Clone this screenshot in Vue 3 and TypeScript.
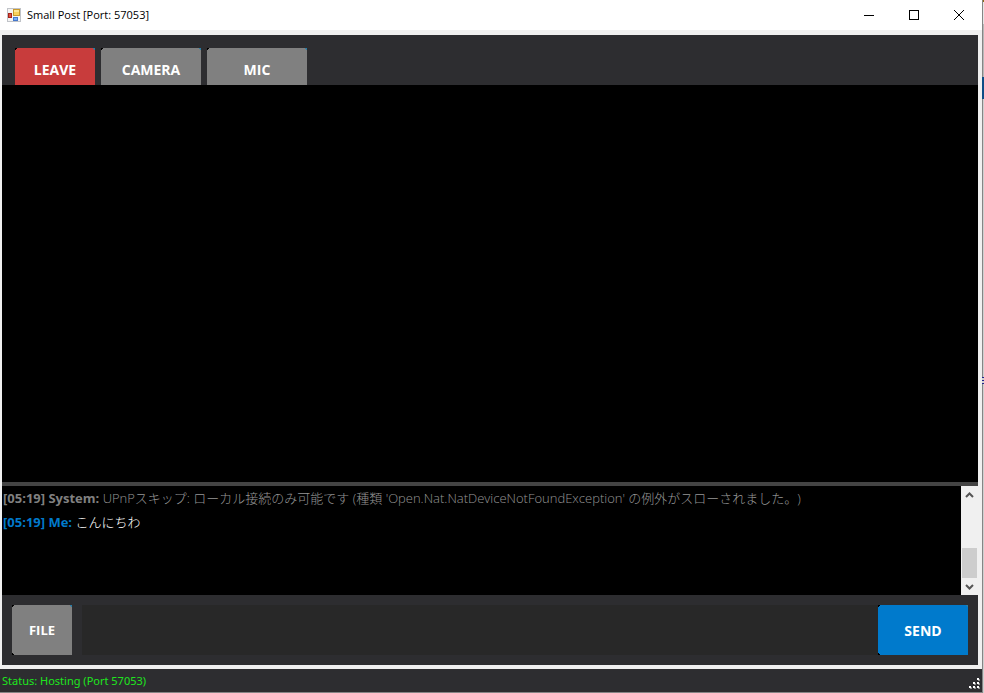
<script setup lang="ts">
import { ref } from 'vue'

interface LogLine {
  time: string
  author: string
  text: string
  kind: 'system' | 'me'
}

const port = 57053
const draft = ref('')
const lines = ref<LogLine[]>([
  {
    time: '05:19',
    author: 'System',
    text: "UPnPスキップ: ローカル接続のみ可能です (種類 'Open.Nat.NatDeviceNotFoundException' の例外がスローされました。)",
    kind: 'system',
  },
  { time: '05:19', author: 'Me', text: 'こんにちわ', kind: 'me' },
])

function send(): void {
  const text = draft.value.trim()
  if (!text) return
  lines.value.push({ time: new Date().toTimeString().slice(0, 5), author: 'Me', text, kind: 'me' })
  draft.value = ''
}
</script>

<template>
  <div class="desktop">
    <div class="window">
      <header class="titlebar">
        <svg class="app-icon" width="14" height="14" viewBox="0 0 14 14" aria-hidden="true">
          <rect x="0.5" y="0.5" width="13" height="13" fill="#f4f4f4" stroke="#c0c3c8" />
          <rect x="6.5" y="1.5" width="6" height="6" fill="#f9d25c" stroke="#c99a2c" />
          <rect x="7" y="2" width="5" height="2" fill="#fde596" />
          <rect x="1.5" y="5.5" width="3" height="4" fill="#dc5040" stroke="#a5231a" />
          <rect x="6.5" y="9.5" width="4" height="3" fill="#78aef6" stroke="#4577cc" />
        </svg>
        <h1 class="title">Small Post [Port: {{ port }}]</h1>
        <div class="caption-buttons">
          <button type="button" aria-label="Minimize">
            <svg width="12" height="12" viewBox="0 0 12 12"><path d="M1 6.5h10" /></svg>
          </button>
          <button type="button" aria-label="Maximize">
            <svg width="12" height="12" viewBox="0 0 12 12"><rect x="1.5" y="1.5" width="9" height="9" /></svg>
          </button>
          <button type="button" aria-label="Close">
            <svg width="12" height="12" viewBox="0 0 12 12"><path d="M1 1l10 10M11 1L1 11" /></svg>
          </button>
        </div>
      </header>

      <main class="client">
        <nav class="toolbar">
          <button type="button" class="btn tab leave">LEAVE</button>
          <button type="button" class="btn tab">CAMERA</button>
          <button type="button" class="btn tab">MIC</button>
        </nav>
        <section class="video" aria-label="Video"></section>
        <section class="log" aria-label="Chat">
          <div class="messages">
            <p v-for="(line, i) in lines" :key="i" class="line" :class="line.kind">
              <b>[{{ line.time }}] {{ line.author }}:</b> <span>{{ line.text }}</span>
            </p>
          </div>
          <div class="scrollbar">
            <button type="button" aria-label="Scroll up">
              <svg width="9" height="6" viewBox="0 0 9 6"><path d="M1 5l3.500-3.500L8 5" /></svg>
            </button>
            <div class="track"><div class="thumb"></div></div>
            <button type="button" aria-label="Scroll down">
              <svg width="9" height="6" viewBox="0 0 9 6"><path d="M1 1l3.500 3.500L8 1" /></svg>
            </button>
          </div>
        </section>
        <form class="composer" @submit.prevent="send">
          <button type="button" class="btn file">FILE</button>
          <input v-model="draft" class="message" type="text" aria-label="Message" />
          <button type="submit" class="btn send">SEND</button>
        </form>
      </main>

      <footer class="status">
        <span>Status: Hosting (Port {{ port }})</span>
        <svg class="grip" width="12" height="12" viewBox="0 0 12 12" aria-hidden="true">
          <path class="grip-shade" d="M9 1h2v2h-2zM5 5h2v2h-2zM9 5h2v2h-2zM1 9h2v2h-2zM5 9h2v2h-2zM9 9h2v2h-2z" />
          <path class="grip-dot" d="M8 0h2v2h-2zM4 4h2v2h-2zM8 4h2v2h-2zM0 8h2v2h-2zM4 8h2v2h-2zM8 8h2v2h-2z" />
        </svg>
      </footer>
    </div>
    <div class="behind" aria-hidden="true">
      <i class="gold"></i><i class="pale"></i><i class="blue"></i><i class="light"></i><i class="text-edge"></i><i class="light rest"></i>
    </div>
  </div>
</template>

<style>
body {
  margin: 0;
  background: #c9c9c9;
}
</style>

<style scoped>
.desktop {
  display: flex;
  height: 100vh;
  font-family: "Open Sans", "Noto Sans CJK JP", sans-serif;
  font-size: 11px;
}
.window {
  flex: 1;
  min-width: 0;
  display: flex;
  flex-direction: column;
  box-sizing: border-box;
  background: #f0f0f0;
  border-right: 1px solid #858585;
  border-bottom: 1px solid #858585;
}
button {
  margin: 0;
  padding: 0;
  border: 0;
  font: inherit;
}
.titlebar {
  height: 30px;
  flex: none;
  display: flex;
  align-items: center;
  padding: 0 1px 0 7px;
  background: #fff;
}
.app-icon {
  flex: none;
  margin-right: 6px;
}
.title {
  flex: 1;
  margin: 0;
  font-size: 11px;
  font-weight: 400;
  line-height: 30px;
  color: #000;
}
.caption-buttons {
  display: flex;
}
.caption-buttons button {
  width: 45px;
  height: 28px;
  display: grid;
  place-items: center;
  background: #fff;
}
.caption-buttons svg {
  fill: none;
  stroke: #000;
}
.client {
  flex: 1;
  min-height: 0;
  display: flex;
  flex-direction: column;
  margin: 5px 4px 4px 2px;
}
.toolbar {
  height: 50px;
  flex: none;
  display: flex;
  align-items: flex-end;
  gap: 6px;
  padding-left: 13px;
  box-sizing: border-box;
  background: #2d2d30;
}
.btn {
  font-size: 14px;
  font-weight: 700;
  color: #fff;
  background:
    linear-gradient(135deg, #000 2px, transparent 2px) top left / 4px 4px no-repeat,
    linear-gradient(225deg, #2b7ea6 2px, transparent 2px) top right / 4px 4px no-repeat,
    #808080;
}
.tab {
  width: 100px;
  height: 37px;
  padding-top: 5px;
}
.leave {
  width: 80px;
  background-color: #c83c3c;
}
.video {
  flex: 1;
  min-height: 0;
  background: #000;
  border-bottom: 4px solid #444;
}
.log {
  height: 109px;
  flex: none;
  display: flex;
  background: #000;
}
.messages {
  flex: 1;
  min-width: 0;
  padding: 0 1px;
}
.line {
  margin: 0;
  font-size: 13px;
  line-height: 24px;
  color: #808080;
  text-spacing-trim: space-all;
}
.line span {
  font-weight: 300;
  color: #969696;
}
.me b {
  color: #007acc;
}
.me span {
  color: #fff;
}
.scrollbar {
  width: 17px;
  display: flex;
  flex-direction: column;
  background: #f0f0f0;
}
.scrollbar button {
  height: 17px;
  display: grid;
  place-items: center;
  background: transparent;
}
.scrollbar svg {
  fill: none;
  stroke: #555;
  stroke-width: 2;
}
.track {
  flex: 1;
  display: flex;
  flex-direction: column;
  justify-content: flex-end;
  padding: 0 1px;
}
.thumb {
  height: 30px;
  background: #cdcdcd;
}
.composer {
  height: 70px;
  flex: none;
  display: flex;
  gap: 10px;
  box-sizing: border-box;
  padding: 10px;
  background: #2d2d30;
}
.file {
  width: 60px;
  font-size: 13px;
}
.message {
  flex: 1;
  min-width: 0;
  margin-right: -10px;
  padding: 0 8px;
  border: 0;
  outline: 0;
  font: inherit;
  color: #fff;
  background: #282828;
}
.file,
.send {
  background:
    linear-gradient(135deg, #000 2px, transparent 2px) top left / 4px 4px no-repeat,
    linear-gradient(45deg, #000 2px, transparent 2px) bottom left / 4px 4px no-repeat,
    linear-gradient(225deg, #2b7ea6 2px, transparent 2px) top right / 4px 4px no-repeat,
    #808080;
}
.send {
  width: 90px;
  background-color: #007acc;
}
.status {
  height: 23px;
  flex: none;
  display: flex;
  align-items: center;
  justify-content: space-between;
  padding: 0 1px 0 2px;
  font-family: "Noto Sans", sans-serif;
  color: #1ee61e;
  background: #2d2d30;
}
.grip {
  margin-top: 6px;
}
.grip-shade {
  fill: #8c8c8c;
}
.grip-dot {
  fill: #fff;
}
.behind {
  width: 1px;
  display: flex;
  flex-direction: column;
  background: #b8b8b8;
}
.behind i {
  flex: none;
  height: 22px;
}
.behind .gold {
  height: 2px;
  background: #8f6a16;
}
.behind .pale {
  background: #e6e6e6;
}
.behind .blue {
  margin: 53px 0 0 -1px;
  background: #0e4d86;
}
.behind .light {
  height: 278px;
  background: #cfcfcf;
}
.behind .text-edge {
  height: 7px;
  margin-left: -1px;
  background: repeating-linear-gradient(#24248c 0 1px, #cfcfcf 1px 3px);
}
.behind .rest {
  flex: 1;
}
</style>
